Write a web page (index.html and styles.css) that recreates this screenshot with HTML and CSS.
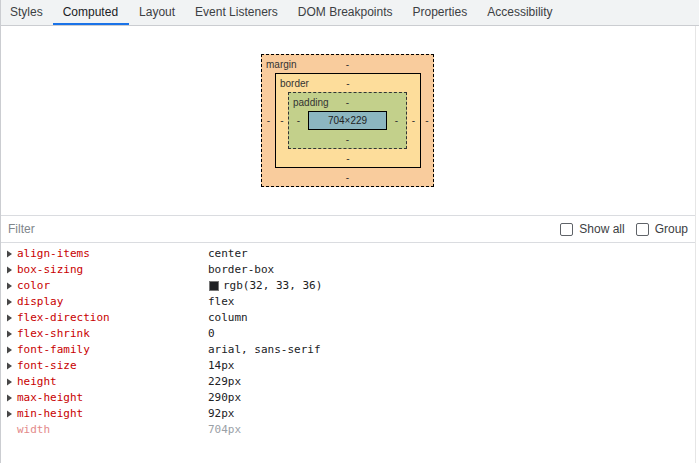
FILE: index.html
```html
<!DOCTYPE html>
<html>
<head>
<meta charset="utf-8">
<link rel="stylesheet" href="styles.css">
</head>
<body>
<div class="page">
  <div class="tabs">
    <div class="tab">Styles</div>
    <div class="tab active">Computed</div>
    <div class="tab">Layout</div>
    <div class="tab">Event Listeners</div>
    <div class="tab">DOM Breakpoints</div>
    <div class="tab">Properties</div>
    <div class="tab">Accessibility</div>
  </div>
  <div class="content">
    <div class="metrics">
      <div class="bx margin">
        <div class="top"><span class="lbl">margin</span><span>-</span><span></span></div>
        <div class="side l">-</div>
        <div class="bx border">
          <div class="top"><span class="lbl">border</span><span>-</span><span></span></div>
          <div class="side l">-</div>
          <div class="bx padding">
            <div class="top"><span class="lbl">padding</span><span>-</span><span></span></div>
            <div class="side l">-</div>
            <div class="cbox">704×229</div>
            <div class="side r">-</div>
            <div class="bottom">-</div>
          </div>
          <div class="side r">-</div>
          <div class="bottom">-</div>
        </div>
        <div class="side r">-</div>
        <div class="bottom">-</div>
      </div>
    </div>
    <div class="filter">
      <span class="ph">Filter</span>
      <label class="chk"><span class="box"></span>Show all</label>
      <label class="chk"><span class="box"></span>Group</label>
    </div>
    <div class="props">
      <div class="row"><svg class="tri" width="6" height="8" viewBox="0 0 6 8"><polygon points="0,0.5 5,4 0,7.5"/></svg><span class="name">align-items</span><span class="val">center</span></div>
      <div class="row"><svg class="tri" width="6" height="8" viewBox="0 0 6 8"><polygon points="0,0.5 5,4 0,7.5"/></svg><span class="name">box-sizing</span><span class="val">border-box</span></div>
      <div class="row"><svg class="tri" width="6" height="8" viewBox="0 0 6 8"><polygon points="0,0.5 5,4 0,7.5"/></svg><span class="name">color</span><span class="val"><span class="swatch"></span>rgb(32, 33, 36)</span></div>
      <div class="row"><svg class="tri" width="6" height="8" viewBox="0 0 6 8"><polygon points="0,0.5 5,4 0,7.5"/></svg><span class="name">display</span><span class="val">flex</span></div>
      <div class="row"><svg class="tri" width="6" height="8" viewBox="0 0 6 8"><polygon points="0,0.5 5,4 0,7.5"/></svg><span class="name">flex-direction</span><span class="val">column</span></div>
      <div class="row"><svg class="tri" width="6" height="8" viewBox="0 0 6 8"><polygon points="0,0.5 5,4 0,7.5"/></svg><span class="name">flex-shrink</span><span class="val">0</span></div>
      <div class="row"><svg class="tri" width="6" height="8" viewBox="0 0 6 8"><polygon points="0,0.5 5,4 0,7.5"/></svg><span class="name">font-family</span><span class="val">arial, sans-serif</span></div>
      <div class="row"><svg class="tri" width="6" height="8" viewBox="0 0 6 8"><polygon points="0,0.5 5,4 0,7.5"/></svg><span class="name">font-size</span><span class="val">14px</span></div>
      <div class="row"><svg class="tri" width="6" height="8" viewBox="0 0 6 8"><polygon points="0,0.5 5,4 0,7.5"/></svg><span class="name">height</span><span class="val">229px</span></div>
      <div class="row"><svg class="tri" width="6" height="8" viewBox="0 0 6 8"><polygon points="0,0.5 5,4 0,7.5"/></svg><span class="name">max-height</span><span class="val">290px</span></div>
      <div class="row"><svg class="tri" width="6" height="8" viewBox="0 0 6 8"><polygon points="0,0.5 5,4 0,7.5"/></svg><span class="name">min-height</span><span class="val">92px</span></div>
      <div class="row inh"><span></span><span class="name">width</span><span class="val">704px</span></div>
    </div>
  </div>
</div>
</body>
</html>
```
FILE: styles.css
```css
html, body { margin: 0; padding: 0; background: #fff; }
body { font-family: "Liberation Sans", Arial, sans-serif; }
.page { display: flex; flex-direction: column; height: 463px; overflow: hidden; }
.tabs {
  display: flex; height: 25px; background: #f1f3f4;
  border-bottom: 1px solid #cbcdd1; border-left: 1px solid #cbcdd1;
}
.tab {
  padding: 0 10px; font-size: 12px; line-height: 25px; color: #3c4043;
  box-sizing: border-box; height: 25px;
}
.tab:first-child { padding-left: 9px; }
.tab.active { color: #202124; border-bottom: 2px solid #1a73e8; line-height: 24px; padding-right: 11px; }
.content {
  flex: 1; width: 696px; box-sizing: border-box;
  border-left: 1px solid #cbcdd1; border-right: 1px solid #e6e6e6;
  display: flex; flex-direction: column;
}
.metrics {
  display: flex; justify-content: center; padding: 28px 1px 28px 0; height: 133px;
}
.bx {
  display: grid; font-size: 10px; color: #333; line-height: 12px;
}
.bx .top { grid-column: 1 / 4; display: grid; grid-template-columns: 1fr auto 1fr; align-items: center; padding-top: 1px; }
.bx .lbl { padding-left: 4px; }
.bx .side { display: flex; align-items: center; justify-content: center; padding-top: 1px; }
.bx .bottom { grid-column: 1 / 4; display: flex; align-items: center; justify-content: center; padding-top: 1px; }
.margin {
  background: #f9cc9d; border: 1px dashed #000;
  grid-template-columns: 13px 146px 12px; grid-template-rows: 18px 95px 18px;
}
.border {
  background: #fddd9b; border: 1px solid #000; box-sizing: border-box;
  grid-template-columns: 12px 119px 13px; grid-template-rows: 18px 57px 18px;
}
.padding {
  background: #c3d08b; border: 1px dashed #333; box-sizing: border-box;
  grid-template-columns: 19px 79px 19px; grid-template-rows: 18px 19px 18px;
}
.cbox {
  background: #8cb6c0; border: 1px solid #000; box-sizing: border-box;
  display: flex; align-items: center; justify-content: center; color: #222; padding-top: 1px;
}
.filter {
  height: 26px; border-top: 1px solid #dadce0; border-bottom: 1px solid #dadce0;
  display: flex; align-items: center; font-size: 12px; padding: 0 7px 0 7px;
}
.ph { color: #80868b; flex: 1; }
.chk { display: flex; align-items: center; color: #3c4043; margin-left: 11px; }
.chk .box {
  width: 13px; height: 13px; box-sizing: border-box; border: 1px solid #5f6368;
  border-radius: 2px; margin-right: 6px; background: #fff;
}
.props { padding-top: 3px; font-family: "DejaVu Sans Mono", monospace; font-size: 11px; }
.row { display: grid; grid-template-columns: 16px 191px 1fr; height: 16px; line-height: 16px; align-items: center; }
.tri { fill: #474747; margin-left: 6px; }
.name { color: #c80000; }
.val { color: #202124; display: flex; align-items: center; }
.swatch { width: 8px; height: 8px; background: #202124; border: 0.5px solid #777; margin: 0 4px 0 1px; }
.inh .name { color: #e38a8a; }
.inh .val { color: #9aa0a6; }
```
